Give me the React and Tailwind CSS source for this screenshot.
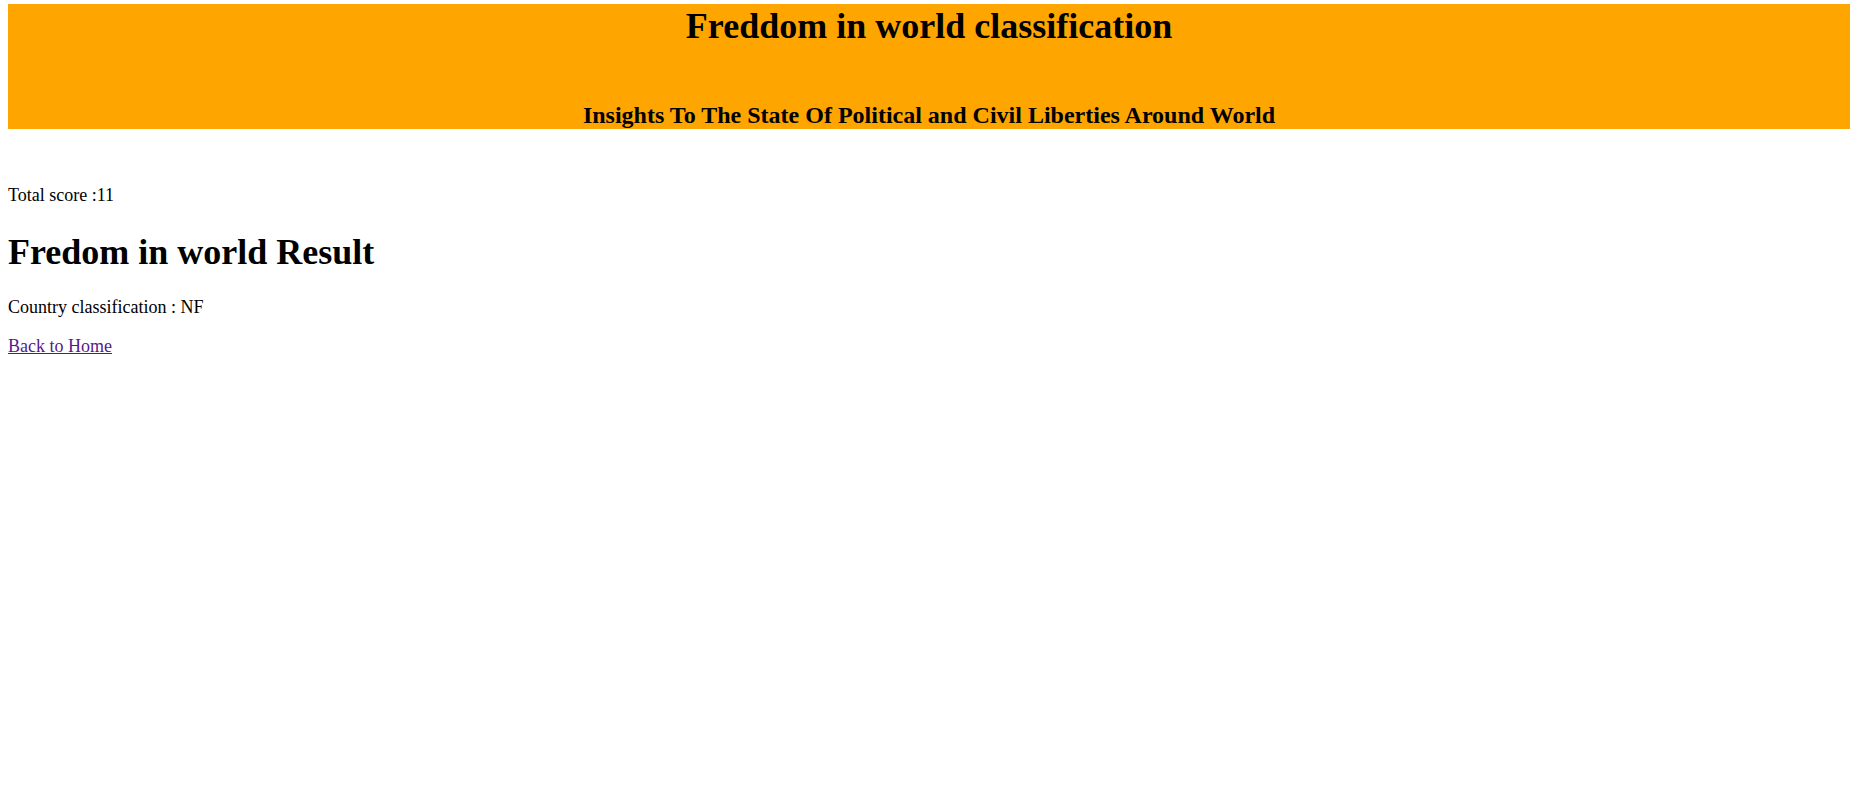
export default function App() {
  return (
    <div className="min-h-[809px] bg-white pt-[4px] pl-[8px] font-['Liberation_Serif','Times_New_Roman',serif] text-black">
      <div className="flex h-[125px] w-[1842px] flex-col items-center justify-between bg-[#ffa500]">
        <h1 className="pt-[2px] text-[36px] font-bold leading-[41px]">Freddom in world classification</h1>
        <h2 className="pb-[2px] text-[24px] font-bold leading-[24px]">Insights To The State Of Political and Civil Liberties Around World</h2>
      </div>
      <div className="flex flex-col items-start">
        <p className="mt-[54px] text-[18px] leading-[24px]">Total score :11</p>
        <h1 className="mt-[23px] text-[36px] font-bold leading-[44px]">Fredom in world Result</h1>
        <p className="mt-[21px] text-[18px] leading-[24px]">Country classification : NF</p>
        <a href="#" className="mt-[15px] text-[18px] leading-[24px] text-[#551a8b] underline">Back to Home</a>
      </div>
    </div>
  );
}
